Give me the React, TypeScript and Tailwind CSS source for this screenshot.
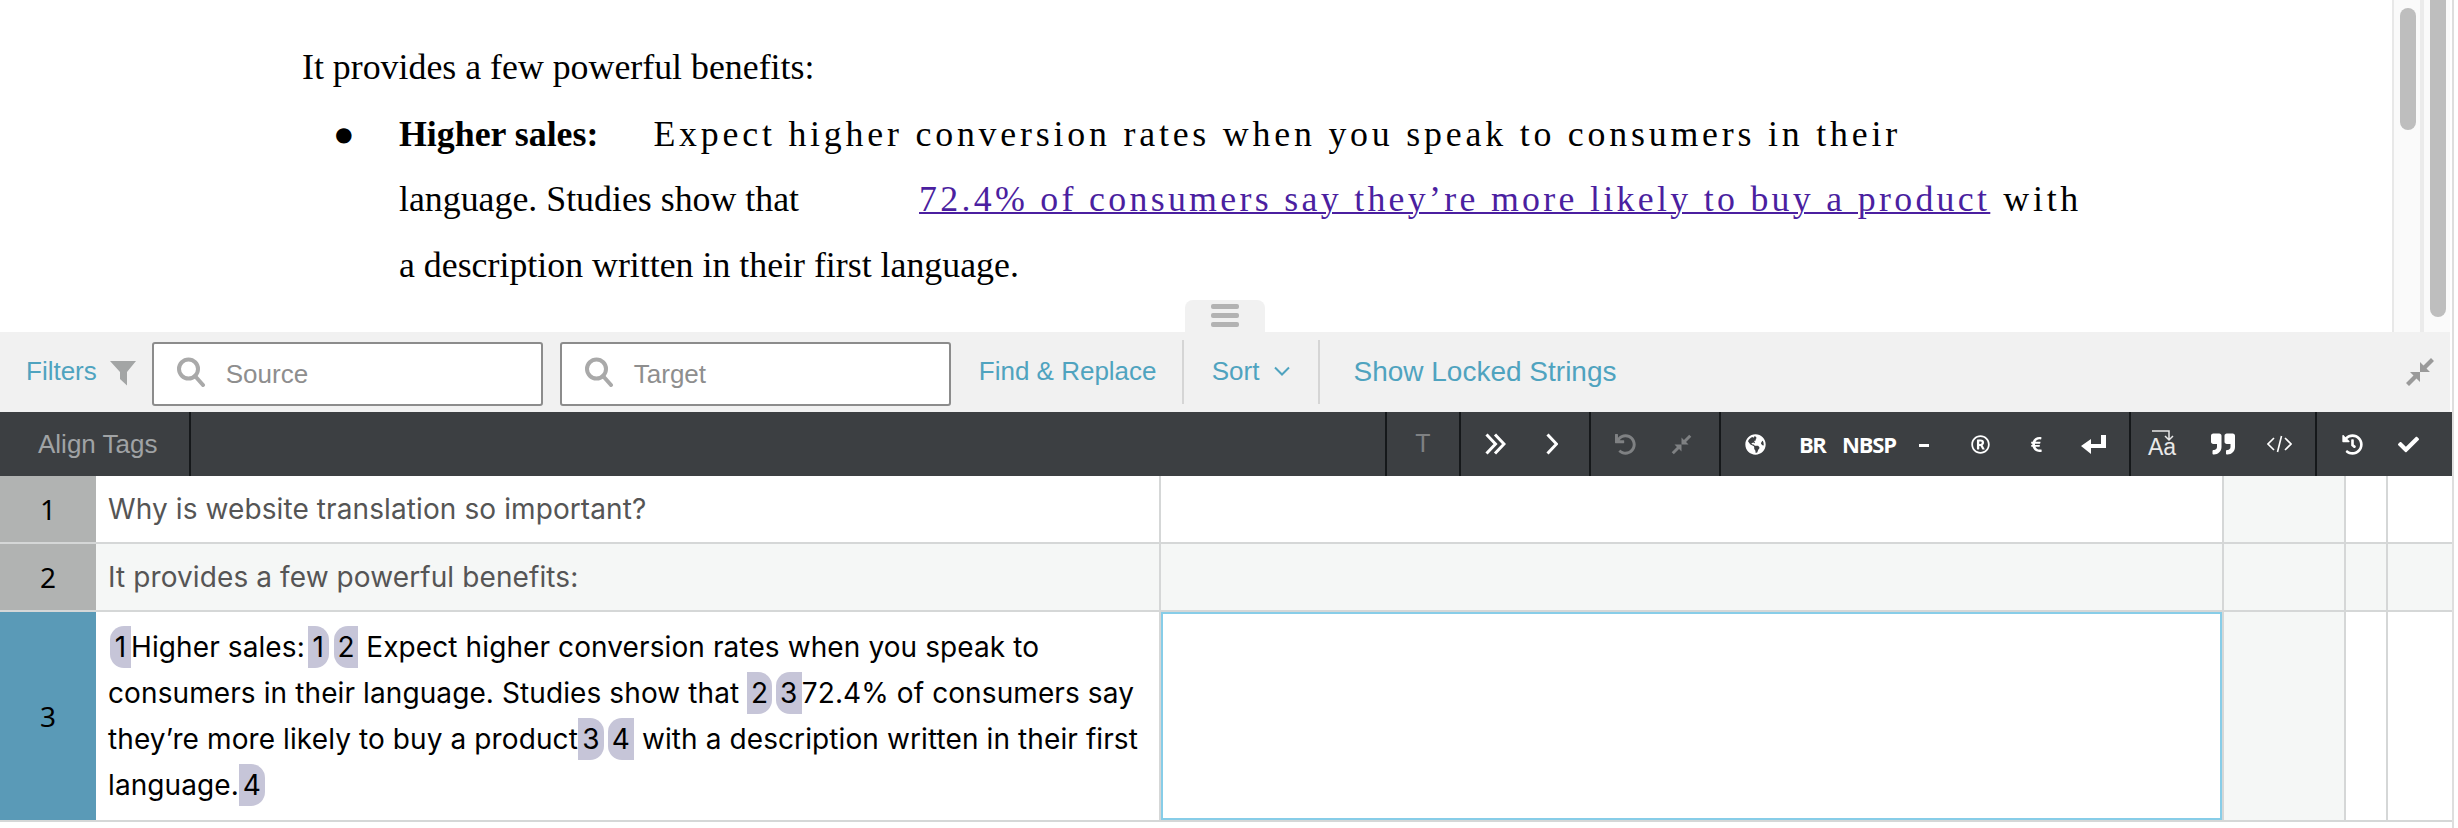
import { FaCheck, FaGlobeAmericas, FaHistory, FaQuoteRight, FaRegRegistered, FaEuroSign, FaUndo } from 'react-icons/fa'

const serif = 'font-["Liberation_Serif",serif]'

const tagWidths: Record<number, string> = {
  1: 'w-[21px]',
  2: 'w-[24.5px]',
  3: 'w-[26px]',
  4: 'w-[26px]',
}

function Divider() {
  return <div className="w-[2px] self-stretch bg-[#15181a] shrink-0" />
}

function SearchBox({ label, width }: { label: string; width: string }) {
  return (
    <div className={`${width} h-[64px] mt-[6px] shrink-0 flex items-center bg-white border-2 border-[#8c8c8c] rounded-[3px] pl-[22px]`}>
      <svg width="30" height="30" viewBox="0 0 30 30" fill="none" stroke="#a9a9a9" strokeWidth="4" className="shrink-0 mb-[4px]">
        <circle cx="12.5" cy="12" r="9.5" />
        <path d="M19 19l8 9" strokeLinecap="round" />
      </svg>
      <span className="ml-[20px] text-[26px] text-[#8e8e8e]">{label}</span>
    </div>
  )
}

function Compress({ size, color }: { size: number; color: string }) {
  return (
    <svg width={size} height={size} viewBox="0 0 30 30" fill={color} className="shrink-0">
      <path d="M15 5v10h10l-3.5-3.5L29 4l-3-3-7.5 7.5z" />
      <path d="M15 25V15H5l3.5 3.5L1 26l3 3 7.5-7.5z" />
    </svg>
  )
}

function Tag({ n, side, className = '' }: { n: number; side: 'open' | 'close'; className?: string }) {
  return (
    <span
      className={`inline-block h-[42px] mt-[2px] leading-[42px] align-top text-center bg-[#c6c5d8] text-black ${tagWidths[n]} ${
        side === 'open' ? 'rounded-l-[14px]' : 'rounded-r-[14px]'
      } ${className}`}
    >
      {n}
    </span>
  )
}

function Row({ n, height, active, shaded, children }: { n: number; height: string; active?: boolean; shaded?: boolean; children: React.ReactNode }) {
  const rowBg = shaded ? 'bg-[#f5f7f6]' : 'bg-white'
  return (
    <div className={`flex ${height} border-b-2 border-[#d5d7d7]`}>
      <div className={`w-[96px] shrink-0 flex items-center justify-center text-[28px] text-black font-["Noto_Sans",sans-serif] ${active ? 'bg-[#5a9ab7]' : 'bg-[#b1b3b2]'}`}>
        {n}
      </div>
      <div className={`w-[1063px] shrink-0 px-[12px] ${rowBg}`}>{children}</div>
      <div className={`w-[1063px] shrink-0 border-l-2 border-[#d5d7d7] ${rowBg}`}>
        {active && <div className="h-full border-2 border-[#87cde8] bg-white" />}
      </div>
      <div className="w-[122px] shrink-0 border-l-2 border-[#d5d7d7] bg-[#f5f7f6]" />
      <div className={`w-[42px] shrink-0 border-l-2 border-[#d5d7d7] ${rowBg}`} />
      <div className={`flex-1 border-l-2 border-[#d5d7d7] ${rowBg}`} />
    </div>
  )
}

export default function App() {
  return (
    <div className="w-[2458px] h-[828px] overflow-hidden bg-white font-['Liberation_Sans',sans-serif]">
      <div className="w-[2454px] border-r-2 border-[#dedede] h-full">
        {/* Document preview */}
        <div className="relative flex h-[332px]">
          <div className={`flex-1 pt-[35px] pl-[302px] text-[35.85px] leading-[65.5px] text-black whitespace-nowrap ${serif}`}>
            <div>It provides a few powerful benefits:</div>
            <div className="flex mt-[1px]">
              <span className="w-[97px] pl-[31px] shrink-0">●</span>
              <div>
                <div>
                  <b>Higher sales:</b>
                  <span className="ml-[55px] tracking-[3.8px]">Expect higher conversion rates when you speak to consumers in their</span>
                </div>
                <div>
                  language. Studies show that
                  <a className="ml-[120px] tracking-[3.3px] text-[#4b1fa0] underline decoration-2">72.4% of consumers say they’re more likely to buy a product</a>
                  <span className="ml-[13px] tracking-[3.75px]">with</span>
                </div>
                <div>a description written in their first language.</div>
              </div>
            </div>
          </div>
          <div className="w-[28px] border-l-2 border-[#e8e8e8] bg-[#fafafa] pt-[8px] pl-[6px]">
            <div className="w-[16px] h-[122px] rounded-full bg-[#bebebe]" />
          </div>
          <div className="w-[30px] border-l-4 border-[#ebebeb] bg-[#fafafa] pl-[6px] mr-[2px]">
            <div className="w-[16px] h-[317px] rounded-b-full bg-[#bebebe]" />
          </div>
          {/* Drag handle */}
          <div className="absolute left-[1185px] bottom-0 w-[80px] h-[32px] rounded-t-[8px] bg-[#f1f1f1] flex flex-col items-center gap-[4px] pt-[4px]">
            <div className="w-[28px] h-[5px] rounded-[2px] bg-[#b3b3b3]" />
            <div className="w-[28px] h-[5px] rounded-[2px] bg-[#b3b3b3]" />
            <div className="w-[28px] h-[5px] rounded-[2px] bg-[#b3b3b3]" />
          </div>
        </div>

        {/* Filter bar */}
        <div className="relative flex items-center h-[80px] pb-[2px] mr-[2px] bg-[#f1f1f1] text-[26px] text-[#4fa3bf]">
          <span className="ml-[26px]">Filters</span>
          <svg width="26" height="26" viewBox="0 0 26 26" fill="#a3a5a5" className="ml-[13px] mr-[16px] mt-[4px] shrink-0">
            <path d="M0 1h26L17 12V25.5L10 19V12z" />
          </svg>
          <SearchBox label="Source" width="w-[391px]" />
          <div className="w-[17px] shrink-0" />
          <SearchBox label="Target" width="w-[391px]" />
          <span className="ml-[28px] w-[203px] shrink-0">Find &amp; Replace</span>
          <div className="w-[2px] h-[64px] mt-[2px] bg-[#d5d5d5] shrink-0" />
          <span className="ml-[28px]">Sort</span>
          <svg width="16" height="10" viewBox="0 0 16 10" fill="none" stroke="#4fa3bf" strokeWidth="2" className="ml-[15px]">
            <path d="M1 1.5l7 7 7-7" />
          </svg>
          <div className="ml-[28px] w-[2px] h-[64px] mt-[2px] bg-[#d5d5d5] shrink-0" />
          <span className="ml-[33px] mt-[2px] text-[28px]">Show Locked Strings</span>
          <div className="absolute right-[15px] top-[25px]">
            <Compress size={30} color="#9a9a9a" />
          </div>
        </div>

        {/* Editor toolbar */}
        <div className="flex items-stretch h-[64px] w-[2452px] bg-[#3c3f42] text-white">
          <div className="w-[189px] flex items-center pl-[38px] text-[26px] text-[#a0a3a5]">Align Tags</div>
          <Divider />
          <div className="w-[1194px]" />
          <Divider />
          <div className="w-[72px] flex items-center justify-center text-[25px] text-[#7f8183]">T</div>
          <Divider />
          <div className="w-[128px] flex items-center pl-[24px]">
            <svg width="21" height="22" viewBox="0 0 21 22" fill="none" stroke="white" strokeWidth="3">
              <path d="M1.5 1.5l9 9.5-9 9.5M10 1.5l9 9.5-9 9.5" />
            </svg>
            <svg width="12" height="22" viewBox="0 0 12 22" fill="none" stroke="white" strokeWidth="3" className="ml-[40px]">
              <path d="M1.5 1.5l9 9.5-9 9.5" />
            </svg>
          </div>
          <Divider />
          <div className="w-[128px] flex items-center gap-[35px] pl-[24px]">
            <FaUndo size={21} className="text-[#7f8183] shrink-0" />
            <Compress size={21} color="#7f8183" />
          </div>
          <Divider />
          <div className="w-[408px] flex items-center text-[22px] font-bold font-['Open_Sans',sans-serif]">
            <FaGlobeAmericas size={21} className="ml-[24px] shrink-0" />
            <span className="ml-[33px] w-[27px] tracking-[-1.5px]">BR</span>
            <span className="ml-[16px] w-[53px] tracking-[-1.2px]">NBSP</span>
            <span className="ml-[24px] w-[10px] h-[3px] bg-white mt-[3px]" />
            <FaRegRegistered size={19} className="ml-[42px] shrink-0" />
            <FaEuroSign size={17} className="ml-[38px] shrink-0" />
            <svg width="25" height="19" viewBox="0 0 25 19" fill="white" className="ml-[36px] shrink-0">
              <path d="M20 0h5v13H10v6L0 11l10-7v5h10z" />
            </svg>
          </div>
          <Divider />
          <div className="w-[184px] flex items-center pl-[17px]">
            <svg width="29" height="28" viewBox="0 0 29 28" fill="none" stroke="#e8e8e8" strokeWidth="1.5" className="shrink-0 overflow-visible">
              <path d="M4 1h17v8M17 6l4 4 4-4" />
              <text x="0" y="25" fill="#e8e8e8" stroke="none" fontSize="23" fontFamily="Liberation Sans">Aa</text>
            </svg>
            <FaQuoteRight size={24} className="ml-[34px] shrink-0" />
            <svg width="25" height="18" viewBox="0 0 25 18" fill="none" stroke="white" strokeWidth="1.6" className="ml-[32px] shrink-0">
              <path d="M7 3l-6 6 6 6M18 3l6 6-6 6M14.5 1l-4 16" />
            </svg>
          </div>
          <Divider />
          <div className="flex-1 flex items-center pl-[25px]">
            <FaHistory size={21} className="shrink-0" />
            <FaCheck size={21} className="ml-[35px] shrink-0" />
          </div>
        </div>

        {/* Segments */}
        <div className="font-['Inter',sans-serif] text-[28px] tracking-[0.1px]">
          <Row n={1} height="h-[68px]">
            <div className="leading-[66px] text-[#555]">Why is website translation so important?</div>
          </Row>
          <Row n={2} height="h-[68px]" shaded>
            <div className="leading-[66px] text-[#555]">It provides a few powerful benefits:</div>
          </Row>
          <Row n={3} height="h-[210px]" active>
            <div className="pt-[12px] leading-[46px] text-black">
              <Tag n={1} side="open" className="ml-[2px]" />
              Higher sales:
              <Tag n={1} side="close" className="ml-[3px]" />
              <Tag n={2} side="open" className="ml-[5px]" /> Expect higher conversion rates when you speak to consumers in their language. Studies show that{' '}
              <Tag n={2} side="close" />
              <Tag n={3} side="open" className="ml-[4px]" />
              72.4% of consumers say they’re more likely to buy a product
              <Tag n={3} side="close" />
              <Tag n={4} side="open" className="ml-[4px]" /> with a description written in their first language.
              <Tag n={4} side="close" />
            </div>
          </Row>
        </div>
      </div>
    </div>
  )
}
